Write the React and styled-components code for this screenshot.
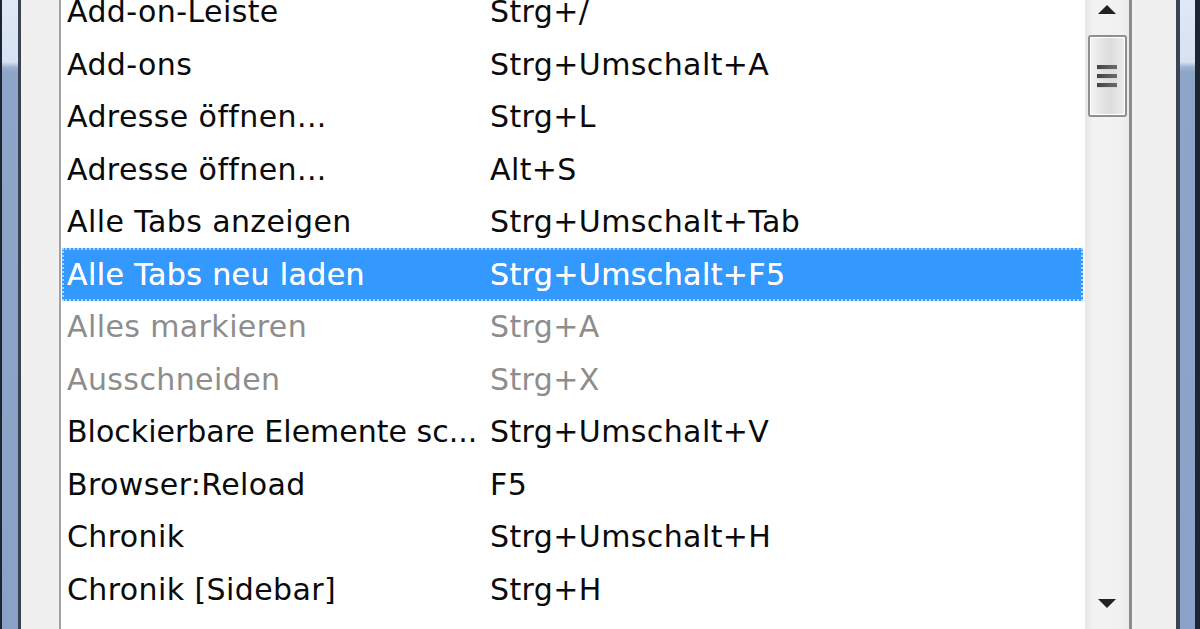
import styled, { createGlobalStyle } from "styled-components";

const GlobalStyle = createGlobalStyle`
  html, body {
    margin: 0;
    padding: 0;
    overflow: hidden;
    background: #ffffff;
  }
`;

const shortcuts = [
  { name: "Add-on-Leiste", keys: "Strg+/" },
  { name: "Add-ons", keys: "Strg+Umschalt+A" },
  { name: "Adresse öffnen...", keys: "Strg+L" },
  { name: "Adresse öffnen...", keys: "Alt+S" },
  { name: "Alle Tabs anzeigen", keys: "Strg+Umschalt+Tab" },
  { name: "Alle Tabs neu laden", keys: "Strg+Umschalt+F5", selected: true },
  { name: "Alles markieren", keys: "Strg+A", disabled: true },
  { name: "Ausschneiden", keys: "Strg+X", disabled: true },
  { name: "Blockierbare Elemente sc...", keys: "Strg+Umschalt+V", tight: true },
  { name: "Browser:Reload", keys: "F5" },
  { name: "Chronik", keys: "Strg+Umschalt+H" },
  { name: "Chronik [Sidebar]", keys: "Strg+H" },
];

const Window = styled.div`
  display: flex;
  height: 629px;
  width: 1200px;
  overflow: hidden;
  font-family: "DejaVu Sans", Verdana, sans-serif;
`;

const Edge = styled.div`
  width: ${(p) => p.$w}px;
  flex: none;
  background: ${(p) => p.$c};
`;

const Glass = styled.div`
  width: ${(p) => p.$w}px;
  flex: none;
  background: linear-gradient(
    to bottom,
    #dfe9f6 0,
    #d6e2f2 62px,
    #9fb4d3 67px,
    #8da5c9 72px,
    #8aa2c7 100%
  );
`;

const Panel = styled.div`
  width: ${(p) => p.$w}px;
  flex: none;
  background: #f0f0f0;
`;

const ListBox = styled.div`
  flex: 1;
  background: #ffffff;
  overflow: hidden;
  padding: 0 2px 0 1px;
`;

const Rows = styled.div`
  margin-top: -14.5px;
`;

const Row = styled.div`
  display: grid;
  grid-template-columns: 423px 1fr;
  align-items: center;
  height: 52.5px;
  padding-left: 5px;
  font-size: 30px;
  letter-spacing: 0.4px;
  white-space: nowrap;
  color: ${(p) => (p.$selected ? "#ffffff" : p.$disabled ? "#8d8d8d" : "#0a0a0a")};
  background: ${(p) => (p.$selected ? "#3399ff" : "transparent")};
  outline: ${(p) => (p.$selected ? "2px dotted #a9d2ff" : "none")};
  outline-offset: -2px;
  text-shadow: ${(p) => (p.$selected ? "0 0 0.6px #ffffff" : "none")};
`;

const Cell = styled.span`
  overflow: hidden;
  letter-spacing: ${(p) => (p.$tight ? "0" : "inherit")};
`;

const Scrollbar = styled.div`
  width: 44px;
  flex: none;
  display: flex;
  flex-direction: column;
  align-items: center;
  background: linear-gradient(to right, #e6e6e6 0, #f3f3f3 20%, #f1f1f1 80%, #e9e9e9 100%);
  border-right: 3px solid #8c8c8c;
`;

const ArrowButton = styled.div`
  height: 30px;
  display: flex;
  align-items: ${(p) => (p.$down ? "flex-end" : "flex-start")};
  justify-content: center;
  padding: ${(p) => (p.$down ? "0 0 20px" : "4px 0 0")};
  box-sizing: border-box;
`;

const Thumb = styled.div`
  margin-top: 5px;
  width: 39px;
  height: 82px;
  box-sizing: border-box;
  border: 2px solid #8f8f8f;
  border-radius: 3px;
  background: linear-gradient(to right, #f4f4f4 0, #e2e2e2 40%, #dcdcdc 60%, #eeeeee 100%);
  display: flex;
  flex-direction: column;
  align-items: center;
  justify-content: center;
  gap: 4px;
  box-shadow: inset 0 0 0 1px #ffffff;
`;

const Grip = styled.div`
  width: 20px;
  height: 4px;
  background: linear-gradient(to right, #444 0, #6a6a6a 100%);
  border-bottom: 1px solid #d8d8d8;
`;

const Track = styled.div`
  flex: 1;
`;

function Arrow({ down }) {
  return (
    <svg width="20" height="11" viewBox="0 0 20 11">
      <path
        d={down ? "M1 1 L19 1 L10 10 Z" : "M1 10 L19 10 L10 1 Z"}
        fill="#222"
      />
    </svg>
  );
}

export default function App() {
  return (
    <>
      <GlobalStyle />
      <Window>
        <Edge $w={2} $c="#1d2533" />
        <Glass $w={16} />
        <Edge $w={3} $c="#3b4352" />
        <Panel $w={38} />
        <Edge $w={2} $c="#a3a3a3" />
        <ListBox>
          <Rows>
            {shortcuts.map((s, i) => (
              <Row key={i} $selected={s.selected} $disabled={s.disabled}>
                <Cell $tight={s.tight}>{s.name}</Cell>
                <Cell>{s.keys}</Cell>
              </Row>
            ))}
          </Rows>
        </ListBox>
        <Scrollbar>
          <ArrowButton>
            <Arrow />
          </ArrowButton>
          <Thumb>
            <Grip />
            <Grip />
            <Grip />
          </Thumb>
          <Track />
          <ArrowButton $down>
            <Arrow down />
          </ArrowButton>
        </Scrollbar>
        <Panel $w={44} />
        <Edge $w={4} $c="#3b4352" />
        <Glass $w={15} />
        <Edge $w={5} $c="#1d2533" />
      </Window>
    </>
  );
}
